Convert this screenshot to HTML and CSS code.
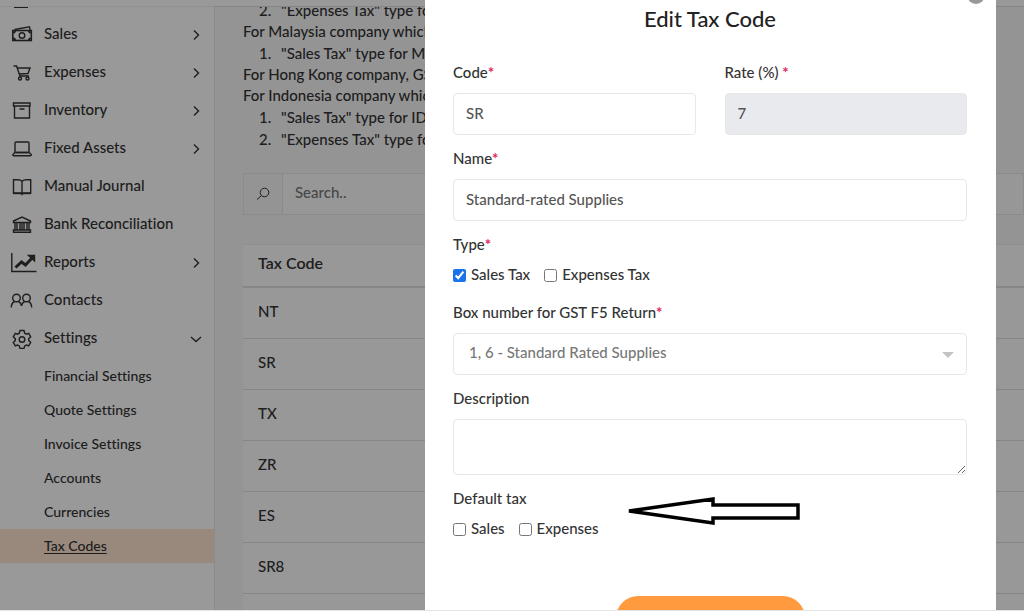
FILE: index.html
```html
<!DOCTYPE html>
<html lang="en">
<head>
<meta charset="utf-8">
<title>Tax Codes</title>
<link rel="stylesheet" href="styles.css">
</head>
<body>
<div class="app">
  <header class="topbar"></header>
  <nav class="sidebar" aria-label="Main">
    <span class="cut-icon"></span>
    <ul class="menu">
      <li><a class="item" href="#"><svg class="icon" viewBox="0 0 24 24"><rect x="2.800" y="8.500" width="18.500" height="10" stroke-width="1.600"/><path d="M4.500 7.500L19.500 4.800l.5 3"/><circle cx="12" cy="13.500" r="2.800"/><path d="M3.500 11l2-2M3.500 16l2 2M20.500 11l-2-2M20.500 16l-2 2" stroke-width="1.800"/></svg>Sales<svg class="chev" viewBox="0 0 12 12"><path d="M4 1.500L8.500 6 4 10.500"/></svg></a></li>
      <li><a class="item" href="#"><svg class="icon" viewBox="0 0 24 24"><path d="M3.500 6H6.500l3.500 10h9M7.500 8h12.500l-2 5.500-8.500.5"/><circle cx="10" cy="18.500" r="1.500"/><circle cx="17.500" cy="18.500" r="1.500"/></svg>Expenses<svg class="chev" viewBox="0 0 12 12"><path d="M4 1.500L8.500 6 4 10.500"/></svg></a></li>
      <li><a class="item" href="#"><svg class="icon" viewBox="0 0 24 24"><path d="M3.500 5h16.500v3H3.500zM4.500 8h15v12h-15zM9.500 11h5"/></svg>Inventory<svg class="chev" viewBox="0 0 12 12"><path d="M4 1.500L8.500 6 4 10.500"/></svg></a></li>
      <li><a class="item" href="#"><svg class="icon" viewBox="0 0 24 24"><rect x="5" y="6" width="14" height="10.500" rx="1"/><path d="M5 16.500L2.800 18.500q0 1.200 1 1.200h16.500q1 0 1-1.200L19 16.500z"/></svg>Fixed Assets<svg class="chev" viewBox="0 0 12 12"><path d="M4 1.500L8.500 6 4 10.500"/></svg></a></li>
      <li><a class="item" href="#"><svg class="icon" viewBox="0 0 24 24"><path d="M12 7.300Q10.500 5.800 8 5.800H3.500v13.500h6.500q1.500 0 2 .9.500-.9 2-.9h6.700V5.800H16.500q-3 0-4.500 1.500zV19.500"/><path d="M3.500 19.300h17" stroke-width="1.800"/></svg>Manual Journal</a></li>
      <li><a class="item" href="#"><svg class="icon" viewBox="0 0 24 24"><path d="M3.500 9L12 5l8.500 4v1.500h-17zM3.500 18h17v2.300h-17zM5 10.500V18M7 10.500V18M10 10.500V18M12 10.500V18M14 10.500V18M17 10.500V18M19 10.500V18"/></svg>Bank Reconciliation</a></li>
      <li><a class="item" href="#"><svg class="icon wide" viewBox="0 0 28 24"><path d="M1.800 3v18.500H26.500"/><path d="M5.500 17.500l6-5.500 4 3L22.500 7.500" stroke-width="3"/><path d="M18.500 5.500h6V11z" fill="currentColor"/></svg>Reports<svg class="chev" viewBox="0 0 12 12"><path d="M4 1.500L8.500 6 4 10.500"/></svg></a></li>
      <li><a class="item" href="#"><svg class="icon" viewBox="0 0 24 24"><circle cx="6.500" cy="10" r="3.800"/><circle cx="16.500" cy="10" r="3.800"/><path d="M1.200 19.500q.3-4.500 3.300-6M8.500 13.500q2.500 1.200 3 4.500.5-3.300 3-4.500M18.500 13.500q3 1.500 3.200 6"/></svg>Contacts</a></li>
      <li><a class="item" href="#"><svg class="icon" viewBox="0 0 24 24"><path d="M10 4.500h4l.7 2.700 1.800 1 2.200-.8 2 3.400-2 2v1.600l2 2-2 3.400-2.200-.8-1.800 1-.7 2.400h-4l-.7-2.400-1.800-1-2.200.8-2-3.400 2-2v-1.600l-2-2 2-3.400 2.200.8 1.800-1z"/><circle cx="12" cy="13.500" r="2.800"/></svg>Settings<svg class="chev" viewBox="0 0 12 12"><path d="M1 4l5 4.500L11 4"/></svg></a>
        <ul class="submenu">
          <li><a class="sub" href="#">Financial Settings</a></li>
          <li><a class="sub" href="#">Quote Settings</a></li>
          <li><a class="sub" href="#">Invoice Settings</a></li>
          <li><a class="sub" href="#">Accounts</a></li>
          <li><a class="sub" href="#">Currencies</a></li>
          <li><a class="sub active" href="#" aria-current="page">Tax Codes</a></li>
        </ul>
      </li>
    </ul>
  </nav>
  <main class="content">
    <div class="notes">
      <ol start="2"><li>"Expenses Tax" type for</li></ol>
      <p>For Malaysia company which</p>
      <ol><li>"Sales Tax" type for MY</li></ol>
      <p>For Hong Kong company, GS</p>
      <p>For Indonesia company which</p>
      <ol><li>"Sales Tax" type for IDS</li><li>"Expenses Tax" type for</li></ol>
    </div>
    <div class="search">
      <button class="search-btn" aria-label="Search"><svg class="glass" viewBox="0 0 14 14"><circle cx="8.500" cy="5.500" r="4.300"/><path d="M5.500 8.500L1 12.500"/></svg></button>
      <input class="search-input" type="text" placeholder="Search.." aria-label="Search tax codes">
    </div>
    <table class="codes">
      <thead><tr><th>Tax Code</th><th></th></tr></thead>
      <tbody>
        <tr><td>NT</td><td></td></tr>
        <tr><td>SR</td><td></td></tr>
        <tr><td>TX</td><td></td></tr>
        <tr><td>ZR</td><td></td></tr>
        <tr><td>ES</td><td></td></tr>
        <tr><td>SR8</td><td></td></tr>
        <tr><td></td><td></td></tr>
      </tbody>
    </table>
  </main>
</div>
<div class="overlay">
  <section class="modal" role="dialog" aria-labelledby="title">
    <button class="close" aria-label="Close"></button>
    <h1 class="title" id="title">Edit Tax Code</h1>
    <form class="form">
      <div class="pair">
        <div class="field"><label for="code">Code<span class="req">*</span></label><input class="box" id="code" type="text" value="SR"></div>
        <div class="field"><label for="rate">Rate (%) <span class="req">*</span></label><input class="box" id="rate" type="text" value="7" disabled></div>
      </div>
      <div class="field"><label for="name">Name<span class="req">*</span></label><input class="box" id="name" type="text" value="Standard-rated Supplies"></div>
      <fieldset class="field checks">
        <legend>Type<span class="req">*</span></legend>
        <div class="options"><label><input type="checkbox" checked>Sales Tax</label><label><input type="checkbox">Expenses Tax</label></div>
      </fieldset>
      <div class="field"><label for="boxno">Box number for GST F5 Return<span class="req">*</span></label>
        <div class="select-wrap"><select class="box" id="boxno"><option>1, 6 - Standard Rated Supplies</option></select><span class="caret"></span></div>
      </div>
      <div class="field"><label for="desc">Description</label><textarea class="box area" id="desc"></textarea></div>
      <fieldset class="field checks">
        <legend>Default tax</legend>
        <div class="options"><label><input type="checkbox">Sales</label><label><input type="checkbox">Expenses</label></div>
        <svg class="arrow" viewBox="0 0 176 30"><path d="M4 15L88 3v6h85v13H88v5z"/></svg>
      </fieldset>
      <button class="save" type="button" aria-label="Save"></button>
    </form>
  </section>
</div>
<div class="edge"></div>
</body>
</html>
```

FILE: styles.css
```css
* { box-sizing: border-box; }
body {
  margin: 0;
  height: 100vh;
  overflow: hidden;
  font-family: Lato, "Liberation Sans", sans-serif;
  font-size: 15px;
  font-weight: 500;
  font-variant-ligatures: none;
  line-height: 20px;
  color: #333;
  background: #fff;
}
ul, ol, p { margin: 0; padding: 0; }
ul { list-style: none; }
a { color: inherit; text-decoration: none; }
input, select, textarea, button { font: inherit; color: inherit; }

.app {
  display: grid;
  grid-template: 6px 1fr / 215px 1fr;
  height: 100vh;
  overflow: hidden;
}
.topbar { grid-column: 1 / -1; background: #fff; }
.sidebar { border-top: 1px solid #f0f0f0; border-right: 1px solid #e8e8e8; }
.cut-icon { display: block; width: 14px; height: 7px; margin-left: 14px; border-top: 1px solid #333; }
.item { display: flex; align-items: center; height: 38px; padding: 0 12px 0 10px; }
.icon, .chev, .glass, .arrow { fill: none; stroke: currentColor; }
.icon { width: 24px; height: 24px; margin: 2px 10px 0 0; stroke-width: 1.4; }
.icon.wide { width: 28px; margin-right: 6px; }
.chev { width: 12px; height: 12px; margin: 4px 0 0 auto; stroke-width: 1.4; }
.submenu { padding-top: 3px; font-size: 14px; }
.sub { display: block; padding: 7px 0 7px 44px; }
.sub.active { background: #ffe3cf; text-decoration: underline; text-underline-offset: 2px; }

.content { min-width: 0; padding-left: 28px; background: #f7f7f7; border-top: 1px solid #ddd; white-space: nowrap; overflow: hidden; }
.notes { margin-top: -8px; }
.notes p { line-height: 21px; }
.notes ol { padding-left: 32px; }
.notes li { line-height: 22px; padding-left: 6px; }
.search { display: flex; margin-top: 23px; height: 42px; border: 1px solid #e8e8e8; }
.search-btn { width: 39px; padding: 0; border: 0; border-right: 1px solid #e4e4e4; background: #f7f7f7; }
.glass { display: block; margin: auto; width: 14px; height: 14px; }
.search-input { flex: 1; padding: 0 12px 4px; border: 0; background: #fcfcfc; }
.search-input::placeholder { color: #777; }
.codes { width: 100%; margin-top: 29px; border-collapse: separate; border-spacing: 0; background: #fdfdfd; table-layout: fixed; }
.codes th { height: 44px; padding: 0 15px 6px; text-align: left; font-size: 16px; font-weight: 600; border-top: 1px solid #eee; border-bottom: 2px solid #e0e0e0; }
.codes th:first-child { width: 182px; }
.codes td { height: 51px; padding: 0 15px 4px; border-bottom: 1px solid #e0e0e0; }

.overlay { position: fixed; inset: 0; padding: 0 28px 0 425px; background: rgba(0, 0, 0, .4); }
.modal { position: relative; min-height: 100vh; padding: 6px 29px 0 28px; background: #fff; }
.close { position: absolute; top: -14px; right: 11px; width: 18px; height: 18px; padding: 0; border: 0; border-radius: 50%; background: #999; }
.title { margin: 0 0 30px; font-size: 22px; line-height: 26px; font-weight: 500; text-align: center; color: #222; }
.form { display: flex; flex-direction: column; gap: 13px; }
.pair { display: grid; grid-template-columns: 1fr 1fr; gap: 29px; }
.field { display: flex; flex-direction: column; gap: 11px; min-width: 0; margin: 0; padding: 0; border: 0; }
.req { color: #e0245e; font-weight: 700; }
.box { width: 100%; height: 42px; padding: 0 12px 2px; border: 1px solid #e8e8e8; border-radius: 4px; background: #fff; color: #555; }
.box:disabled { background: #e9eaee; }
.select-wrap { position: relative; }
select.box { display: block; appearance: none; padding: 0 15px 4px; color: #777; }
.caret { position: absolute; right: 13px; top: 19px; border: 6px solid transparent; border-top-color: #c4c4c4; border-bottom: 0; pointer-events: none; }
.area { display: block; height: 56px; padding: 8px 12px; resize: vertical; }
.checks { position: relative; display: block; margin-bottom: 5px; }
.checks legend { padding: 0; }
.options { display: flex; gap: 14px; padding-top: 10px; }
.options label { display: flex; align-items: center; gap: 5px; }
.options input { width: 13px; height: 13px; margin: 2px 0 0; accent-color: #1a73e8; }
.arrow { position: absolute; left: 172px; top: -12px; width: 176px; height: 30px; stroke: #000; stroke-width: 3.5; }
.save { align-self: center; width: 189px; height: 44px; margin-top: 40px; border: 0; border-radius: 22px; background: #ff9a3f; }
.edge { position: fixed; inset: auto 0 0; height: 2px; border-top: 1px solid #e4e4e4; background: #fff; }
```
